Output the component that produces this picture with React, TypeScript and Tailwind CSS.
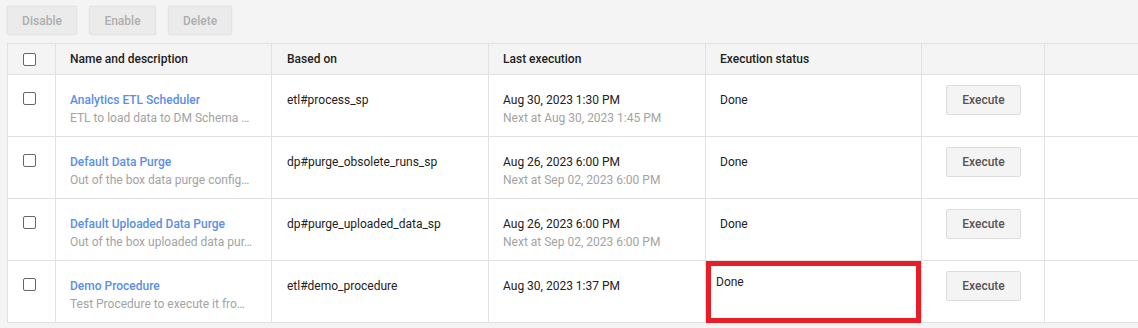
import React from "react";

type Row = {
  name: string;
  desc: string;
  basedOn: string;
  last: string;
  next?: string;
  status: string;
  highlight?: boolean;
};

const rows: Row[] = [
  {
    name: "Analytics ETL Scheduler",
    desc: "ETL to load data to DM Schema …",
    basedOn: "etl#process_sp",
    last: "Aug 30, 2023 1:30 PM",
    next: "Next at Aug 30, 2023 1:45 PM",
    status: "Done",
  },
  {
    name: "Default Data Purge",
    desc: "Out of the box data purge config…",
    basedOn: "dp#purge_obsolete_runs_sp",
    last: "Aug 26, 2023 6:00 PM",
    next: "Next at Sep 02, 2023 6:00 PM",
    status: "Done",
  },
  {
    name: "Default Uploaded Data Purge",
    desc: "Out of the box uploaded data pur…",
    basedOn: "dp#purge_uploaded_data_sp",
    last: "Aug 26, 2023 6:00 PM",
    next: "Next at Sep 02, 2023 6:00 PM",
    status: "Done",
  },
  {
    name: "Demo Procedure",
    desc: "Test Procedure to execute it fro…",
    basedOn: "etl#demo_procedure",
    last: "Aug 30, 2023 1:37 PM",
    status: "Done",
    highlight: true,
  },
];

function Checkbox() {
  return <div className="w-[13px] h-[13px] border border-[#666] rounded-[2px] bg-white ml-[15px]" />;
}

function ToolButton({ label, width }: { label: string; width: string }) {
  return (
    <button
      className={`${width} h-[29px] bg-[#ebebeb] border border-[#e4e4e4] rounded-[2px] shadow-[0_0_2px_rgba(0,0,0,0.08)] text-[#aeaeae] text-[12px] font-medium`}
    >
      {label}
    </button>
  );
}

export default function App() {
  return (
    <div
      className="w-[1138px] h-[328px] bg-[#f4f4f4] overflow-hidden text-[12px] text-[#222]"
      style={{ fontFamily: "Roboto, 'Liberation Sans', sans-serif" }}
    >
      {/* Toolbar */}
      <div className="flex gap-3 pl-[7px] pt-[6px] h-[43px]">
        <ToolButton label="Disable" width="w-[70px]" />
        <ToolButton label="Enable" width="w-[67px]" />
        <ToolButton label="Delete" width="w-[64px]" />
      </div>

      {/* Table */}
      <div className="pl-[7px] w-[1240px]">
        <table className="border-collapse table-fixed w-[1233px]">
          <colgroup>
            <col className="w-[48px]" />
            <col className="w-[216px]" />
            <col className="w-[217px]" />
            <col className="w-[217px]" />
            <col className="w-[216px]" />
            <col className="w-[123px]" />
            <col />
          </colgroup>
          <thead>
            <tr className="h-[31px] bg-[#f4f4f4]">
              <th className="border border-[#e1e1e1] p-0 align-middle">
                <Checkbox />
              </th>
              <th className="border border-[#e1e1e1] pl-[14px] text-left font-medium">Name and description</th>
              <th className="border border-[#e1e1e1] pl-[15px] text-left font-medium">Based on</th>
              <th className="border border-[#e1e1e1] pl-[14px] text-left font-medium">Last execution</th>
              <th className="border border-[#e1e1e1] pl-[14px] text-left font-medium">Execution status</th>
              <th className="border border-[#e1e1e1]" />
              <th className="border border-[#e1e1e1]" />
            </tr>
          </thead>
          <tbody>
            {rows.map((r) => (
              <tr key={r.name} className="h-[62px] bg-white">
                <td className="border border-[#e1e1e1] align-top p-0 pt-[17px]">
                  <Checkbox />
                </td>
                <td className="border border-[#e1e1e1] align-top pt-[16px] pl-[14px] pr-[10px]">
                  <div className="text-[#5b8ee6] font-medium leading-[18px] whitespace-nowrap">{r.name}</div>
                  <div className="text-[#a3a3a3] leading-[18px] whitespace-nowrap">{r.desc}</div>
                </td>
                <td className="border border-[#e1e1e1] align-top pt-[16px] pl-[15px]">
                  <div className="leading-[18px]">{r.basedOn}</div>
                </td>
                <td className="border border-[#e1e1e1] align-top pt-[16px] pl-[14px]">
                  <div className="leading-[18px]">{r.last}</div>
                  {r.next && <div className="text-[#a3a3a3] leading-[18px]">{r.next}</div>}
                </td>
                {r.highlight ? (
                  <td className="border border-[#e1e1e1] align-top p-0 relative">
                    <div className="pt-[12px] pl-[10px] leading-[18px]">{r.status}</div>
                    <div className="absolute left-0 top-0 right-0 bottom-[-1px] border-[5px] border-[#e81d25]" />
                  </td>
                ) : (
                  <td className="border border-[#e1e1e1] align-top pt-[16px] pl-[14px]">
                    <div className="leading-[18px]">{r.status}</div>
                  </td>
                )}
                <td className="border border-[#e1e1e1] align-top pt-[10px] pl-[24px]">
                  <button className="w-[75px] h-[30px] bg-[#f4f4f4] border border-[#dcdcdc] rounded-[2px] text-[#555] text-[12px] font-medium">
                    Execute
                  </button>
                </td>
                <td className="border border-[#e1e1e1]" />
              </tr>
            ))}
          </tbody>
        </table>
      </div>
    </div>
  );
}
